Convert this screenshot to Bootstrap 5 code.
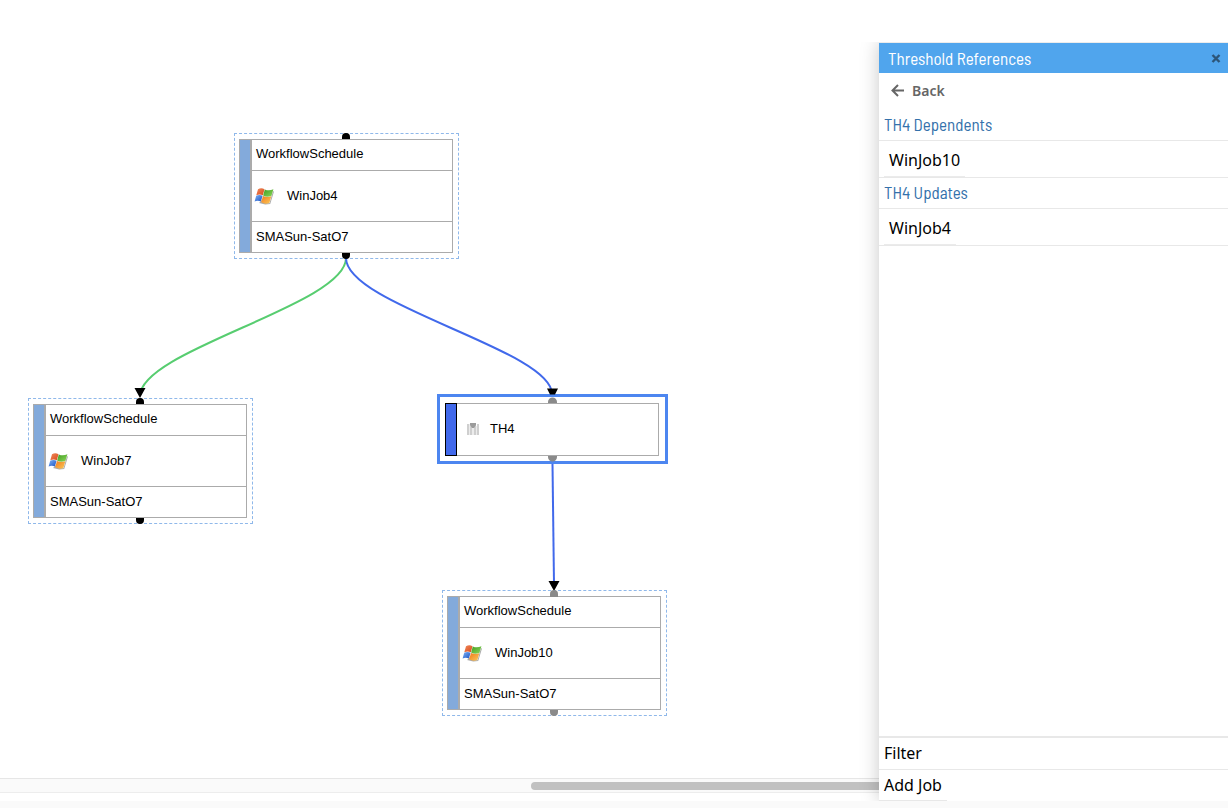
<!DOCTYPE html>
<html lang="en">
<head>
<meta charset="utf-8">
<meta name="viewport" content="width=device-width, initial-scale=1">
<title>Workflow Designer</title>
<link href="https://cdn.jsdelivr.net/npm/bootstrap@5.3.0/dist/css/bootstrap.min.css" rel="stylesheet">
<style>
  body { background: #fafafa; color: #000; font-family: "Noto Sans", "Open Sans", sans-serif; font-size: 16px; }
  .workspace { background: #fff; margin-bottom: 7px; }

  /* Diagram canvas */
  .edges { left: 0; top: 0; width: 100%; height: 100%; pointer-events: none; z-index: 2; }
  .job, .threshold { width: 225px; font: 13px/18px "Liberation Sans", Arial, sans-serif; }
  .job { height: 126px; border: 1px dashed #8fb8ea; padding: 5px 5px 5px 4px; }
  .frame { border: 1px solid #ababab; }
  .stripe { width: 12px; background: #83aadb; border-right: 2px solid #ababab; }
  .job-line { height: 30px; padding: 0 4px; }
  .job-line:first-child { padding-bottom: 2px; }
  .job-main { height: 52px; padding: 0 2px; gap: 13px; border-top: 1px solid #ababab; border-bottom: 1px solid #ababab; }
  .threshold { width: 231px; height: 70px; border: 3px solid #4d86f0; background: #fff; padding: 6px 6px 5px 5px; }
  .threshold .frame { border-left: 0; }
  .threshold .stripe { background: #4169eb; border: 1px solid #000; }
  .threshold-main { padding: 0 8px 2px; gap: 9px; }

  .scroll-track { height: 15px; margin-bottom: 8px; background: #fafafa; border-top: 1px solid #e6e6e6; border-bottom: 1px solid #ededed; }
  .scroll-thumb { height: 8px; width: 39.6%; min-width: 60px; background: #c1c1c1; border-radius: 4px 0 0 4px; }

  /* Side panel */
  .side-panel { width: 349px; margin-top: 42px; background: #fff; border-top: 1px solid #ececec; box-shadow: 0 0 18px rgba(0,0,0,.22); clip-path: inset(0 0 0 -20px); z-index: 3; }
  .narrow { font-family: "Barlow Semi Condensed", "Roboto Condensed", "Liberation Sans Narrow", Roboto, sans-serif; font-size: 17px; line-height: 30px; font-weight: 400; }
  .panel-title { height: 30px; background: #50a5ed; color: #fff; padding: 0 6px 0 9px; }
  .plain-btn { background: none; border: 0; padding: 0; color: inherit; text-align: left; }
  .back { height: 36px; padding: 0 12px 2px; gap: 8px; font-size: 14px; font-weight: 600; color: #666; }
  .section-title { height: 32px; padding: 0 5px; color: #3471ab; border-bottom: 1px solid #e8e8e8; }
  .ref-row { height: 37px; margin-bottom: -1px; padding: 0 5px; border-bottom: 1px solid #e8e8e8; }
  .ref-row button { height: 36px; padding: 2px 5px 0; border-bottom: 1px solid #ebebeb; }
  .panel-foot { border-top: 2px solid #e8e8e8; }
  .foot-btn { height: 31px; padding: 0 5px; border-bottom: 1px solid #e8e8e8; }
  .foot-btn:first-child { height: 32px; padding-bottom: 2px; }
</style>
</head>
<body class="d-flex flex-column min-vh-100">
<svg width="0" height="0" class="position-absolute" aria-hidden="true">
  <defs>
    <linearGradient id="red" x1="0" y1="0" x2="1" y2="1"><stop offset="0" stop-color="#f08a5c"/><stop offset="1" stop-color="#d94a1c"/></linearGradient>
    <linearGradient id="green" x1="0" y1="0" x2="1" y2="1"><stop offset="0" stop-color="#3f9c22"/><stop offset="1" stop-color="#8ed85a"/></linearGradient>
    <linearGradient id="blue" x1="0" y1="0" x2="1" y2="1"><stop offset="0" stop-color="#7db2f4"/><stop offset="1" stop-color="#1c52c4"/></linearGradient>
    <linearGradient id="amber" x1="0" y1="0" x2="1" y2="1"><stop offset="0" stop-color="#f07a1c"/><stop offset="1" stop-color="#fbc95a"/></linearGradient>
    <symbol id="windows" viewBox="0 0 20 18">
      <path d="M5 16 8 13l4 3 3.500.3 3.500-12 1 .2-3.800 12.600-5 .4z" fill="#555" opacity=".5"/>
      <path d="M4 2.200C6.200.8 8.500.9 10.500 2.200L8.800 8.300C6.800 7.200 4.500 7.200 2.300 8.300z" fill="url(#red)"/>
      <path d="M10.800 2.400c2.500 1.300 5.400 1.300 8.600-.1L17.400 9c-2.900 1.200-5.800 1.100-8.300-.4z" fill="url(#green)"/>
      <path d="M2.200 8.700c2.200-1 4.400-1 6.400.1L6.900 14.600C4.900 13.500 2.800 13.500.6 14.400z" fill="url(#blue)"/>
      <path d="M9 9c2.600 1.300 5.400 1.400 8.300.3L15.400 15.900c-2.900 1.200-5.700 1-8.200-.9z" fill="url(#amber)"/>
    </symbol>
  </defs>
</svg>

<div class="workspace d-flex flex-grow-1">
  <main class="d-flex flex-column flex-grow-1 overflow-hidden">
    <div class="position-relative flex-grow-1 overflow-hidden">
      <svg class="edges position-absolute" fill="none" aria-hidden="true">
        <path d="M346 258C346 305 140 350 140 396" stroke="#57cd70" stroke-width="2"/>
        <path d="M346 258C346 305 552 350 552 394" stroke="#4169eb" stroke-width="2"/>
        <path d="M552.500 464 554 584" stroke="#4169eb" stroke-width="2"/>
        <g fill="#000">
          <path d="M134.500 388h11l-5.500 10zM547 388.500h11l-3 6h-5zM548.500 581h11l-5.500 10z"/>
          <path d="M342 139v-2a4 4 0 0 1 8 0v2zM342 253v2a4 4 0 0 0 8 0v-2z"/>
          <path d="M136 404v-2a4 4 0 0 1 8 0v2zM136 518v2a4 4 0 0 0 8 0v-2z"/>
        </g>
        <g fill="#8a8a8a">
          <path d="M548 403v-1a4 4 0 0 1 9 0v1zM548 456v1a4 4 0 0 0 9 0v-1z"/>
          <path d="M550 597v-3a4 4 0 0 1 8 0v3zM550 710v2a4 4 0 0 0 8 0v-2z"/>
        </g>
      </svg>

      <div class="job position-absolute" style="left:234px;top:133px">
        <div class="frame d-flex h-100">
          <div class="stripe"></div>
          <div class="flex-grow-1">
            <div class="job-line d-flex align-items-center">WorkflowSchedule</div>
            <div class="job-main d-flex align-items-center"><svg width="20" height="18" aria-hidden="true"><use href="#windows"/></svg><span>WinJob4</span></div>
            <div class="job-line d-flex align-items-center">SMASun-SatO7</div>
          </div>
        </div>
      </div>

      <div class="job position-absolute" style="left:28px;top:398px">
        <div class="frame d-flex h-100">
          <div class="stripe"></div>
          <div class="flex-grow-1">
            <div class="job-line d-flex align-items-center">WorkflowSchedule</div>
            <div class="job-main d-flex align-items-center"><svg width="20" height="18" aria-hidden="true"><use href="#windows"/></svg><span>WinJob7</span></div>
            <div class="job-line d-flex align-items-center">SMASun-SatO7</div>
          </div>
        </div>
      </div>

      <div class="threshold position-absolute" style="left:437px;top:394px">
        <div class="d-flex h-100">
          <div class="stripe"></div>
          <div class="frame threshold-main flex-grow-1 d-flex align-items-center">
            <svg width="16" height="14" viewBox="0 0 16 14" aria-hidden="true">
              <path d="M2 2h2v11H2zM5 2h2v11H5zM9 3h2v10H9zM12 2h2v11h-2z" fill="#cfcfcf"/>
              <path d="M4 2h1v11H4zM7 4h2v9H7zM11 4h1v9h-1z" fill="#ececec"/>
              <path d="M5 1h6v2L9 6H7L5 3z" fill="#9b9b9b"/>
            </svg>
            <span>TH4</span>
          </div>
        </div>
      </div>

      <div class="job position-absolute" style="left:442px;top:590px">
        <div class="frame d-flex h-100">
          <div class="stripe"></div>
          <div class="flex-grow-1">
            <div class="job-line d-flex align-items-center">WorkflowSchedule</div>
            <div class="job-main d-flex align-items-center"><svg width="20" height="18" aria-hidden="true"><use href="#windows"/></svg><span>WinJob10</span></div>
            <div class="job-line d-flex align-items-center">SMASun-SatO7</div>
          </div>
        </div>
      </div>
    </div>
    <div class="scroll-track d-flex align-items-center justify-content-end"><div class="scroll-thumb"></div></div>
  </main>

  <aside class="side-panel position-relative d-flex flex-column flex-shrink-0">
    <div class="panel-title d-flex align-items-center justify-content-between">
      <h1 class="narrow m-0">Threshold References</h1>
      <button type="button" class="plain-btn d-flex" aria-label="Close">
        <svg width="12" height="12" viewBox="0 0 12 12" aria-hidden="true"><path d="m2.500 3 7 7m0-7-7 7" stroke="#2c5578" stroke-width="2.400"/></svg>
      </button>
    </div>
    <button type="button" class="plain-btn back d-flex align-items-center">
      <svg width="13" height="14" viewBox="0 0 13 14" fill="none" stroke="#666" stroke-width="2" aria-hidden="true"><path d="M7 2 1.500 7.500 7 13M1.500 7.500H13"/></svg>
      Back
    </button>
    <h2 class="narrow section-title m-0">TH4 Dependents</h2>
    <div class="ref-row"><button type="button" class="plain-btn">WinJob10</button></div>
    <h2 class="narrow section-title m-0">TH4 Updates</h2>
    <div class="ref-row"><button type="button" class="plain-btn">WinJob4</button></div>
    <div class="panel-foot mt-auto d-flex flex-column">
      <button type="button" class="plain-btn foot-btn">Filter</button>
      <button type="button" class="plain-btn foot-btn align-self-start">Add Job</button>
    </div>
  </aside>
</div>
<script src="https://cdn.jsdelivr.net/npm/bootstrap@5.3.0/dist/js/bootstrap.bundle.min.js"></script>
</body>
</html>
